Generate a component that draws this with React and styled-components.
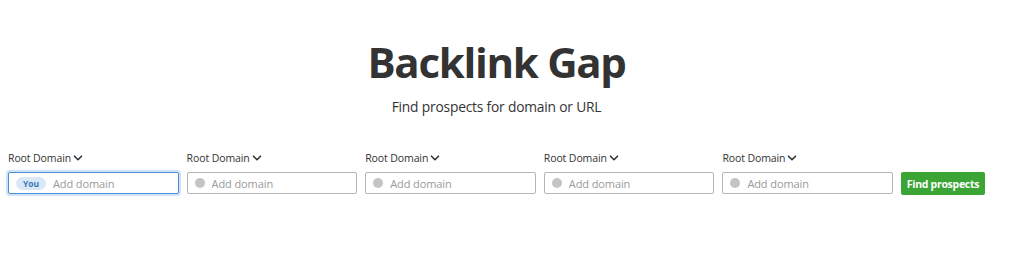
import React from "react";
import styled, { createGlobalStyle } from "styled-components";

const GlobalStyle = createGlobalStyle`
  html, body {
    margin: 0;
    padding: 0;
    background: #fff;
  }
  body {
    font-family: "Open Sans", "Noto Sans", sans-serif;
    color: #333;
  }
`;

const Page = styled.div`
  width: 1010px;
  height: 275px;
  box-sizing: border-box;
  padding: 32px 8px 0 8px;
`;

const Header = styled.div`
  display: flex;
  flex-direction: column;
  align-items: center;
  padding-right: 17px;
`;

const Title = styled.h1`
  margin: 0;
  font-size: 42px;
  line-height: 60px;
  font-weight: 700;
  color: #333;
  letter-spacing: -1.3px;
`;

const Subtitle = styled.p`
  margin: 6px 0 0 0;
  font-size: 13.8px;
  line-height: 18px;
  color: #333;
  letter-spacing: -0.2px;
`;

const Row = styled.div`
  display: flex;
  align-items: flex-end;
  gap: 8px;
  margin-top: 35px;
`;

const Field = styled.div`
  display: flex;
  flex-direction: column;
  width: 170.6px;
`;

const Label = styled.button`
  display: flex;
  align-items: center;
  gap: 2px;
  padding: 0;
  margin: 0 0 7px 0;
  border: none;
  background: none;
  font-family: inherit;
  font-size: 10.5px;
  line-height: 14px;
  color: #333;
  letter-spacing: -0.1px;
  cursor: pointer;
`;

const InputBox = styled.div`
  display: flex;
  align-items: center;
  gap: 7px;
  height: 22px;
  box-sizing: border-box;
  padding: 0 7px;
  border: 1px solid ${(p) => (p.$active ? "#4c8fd6" : "#b5b5b5")};
  border-radius: 2px;
  background: #fff;
  box-shadow: ${(p) => (p.$active ? "0 0 0 2px #cfe2f6" : "none")};
`;

const Dot = styled.span`
  width: 10px;
  height: 10px;
  border-radius: 50%;
  background: #c4c4c4;
  flex-shrink: 0;
`;

const Badge = styled.span`
  display: inline-flex;
  align-items: center;
  justify-content: center;
  width: 30px;
  height: 13px;
  border-radius: 7px;
  background: #d9e8f7;
  color: #3d78b6;
  font-size: 8.5px;
  font-weight: 700;
  flex-shrink: 0;
`;

const Input = styled.input`
  flex: 1;
  min-width: 0;
  border: none;
  outline: none;
  padding: 0;
  background: transparent;
  font-family: inherit;
  font-size: 11px;
  color: #333;
  letter-spacing: -0.1px;

  &::placeholder {
    color: #9a9a9a;
  }
`;

const Button = styled.button`
  height: 23px;
  width: 84px;
  margin-bottom: -1px;
  padding: 0;
  border: none;
  border-radius: 2px;
  background: #3aa534;
  color: #fff;
  font-family: inherit;
  font-size: 10.5px;
  font-weight: 700;
  letter-spacing: -0.3px;
  cursor: pointer;
`;

const Chevron = () => (
  <svg width="10" height="10" viewBox="0 0 10 10" fill="none">
    <path d="M1.5 3.2 L5 6.7 L8.5 3.2" stroke="#333" strokeWidth="1.6" strokeLinecap="round" strokeLinejoin="round" />
  </svg>
);

const fields = [0, 1, 2, 3, 4];

export default function App() {
  return (
    <>
      <GlobalStyle />
      <Page>
        <Header>
          <Title>Backlink Gap</Title>
          <Subtitle>Find prospects for domain or URL</Subtitle>
        </Header>
        <Row>
          {fields.map((i) => (
            <Field key={i}>
              <Label type="button">
                Root Domain <Chevron />
              </Label>
              <InputBox $active={i === 0}>
                {i === 0 ? <Badge>You</Badge> : <Dot />}
                <Input placeholder="Add domain" />
              </InputBox>
            </Field>
          ))}
          <Button type="button">Find prospects</Button>
        </Row>
      </Page>
    </>
  );
}
